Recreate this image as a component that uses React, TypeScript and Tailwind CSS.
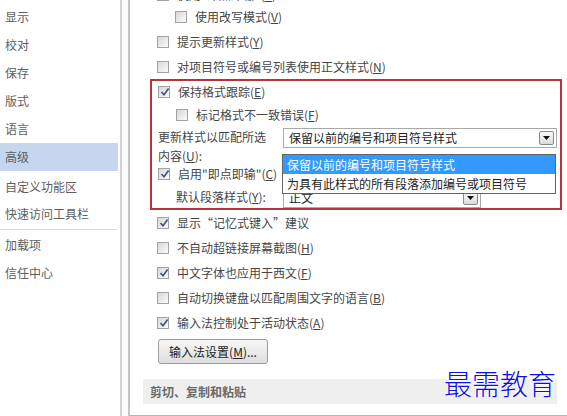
import React from "react";

const font = { fontFamily: '"Noto Sans CJK SC", "Noto Sans", sans-serif' };

function Box({ checked = false }: { checked?: boolean }) {
  return (
    <div className="relative w-[12px] h-[12px] shrink-0 border border-[#a3a3a3] bg-gradient-to-br from-[#d8d8d8] to-[#fbfbfb]">
      {checked && (
        <svg className="absolute left-[1px] top-[0px]" width="10" height="10" viewBox="0 0 10 10">
          <path d="M1.5 5 L4 7.8 L8.6 1.6" fill="none" stroke="#3d4f86" strokeWidth="1.6" />
        </svg>
      )}
    </div>
  );
}

function Acc({ k }: { k: string }) {
  return (
    <span>
      (<span className="underline">{k}</span>)
    </span>
  );
}

function Row({
  h,
  checked,
  indent,
  children,
}: {
  h: string;
  checked?: boolean;
  indent?: boolean;
  children: React.ReactNode;
}) {
  return (
    <div className={`flex items-center gap-[8px] ${h} ${indent ? "pl-[18px]" : ""}`}>
      <Box checked={checked} />
      <span className="whitespace-nowrap">{children}</span>
    </div>
  );
}

function Arrow() {
  return (
    <div className="w-[15px] h-[14px] rounded-[2px] border border-[#8a8a8a] bg-gradient-to-b from-[#fafafa] to-[#dcdcdc] flex items-center justify-center">
      <svg width="7" height="4" viewBox="0 0 7 4">
        <path d="M0 0 L7 0 L3.5 4 Z" fill="#111" />
      </svg>
    </div>
  );
}

export default function App() {
  const side1 = ["显示", "校对", "保存", "版式", "语言"];
  return (
    <div className="w-[567px] h-[416px] bg-white flex overflow-hidden text-[12px] text-[#464646] relative" style={font}>
      {/* Sidebar */}
      <div className="w-[120px] shrink-0 flex flex-col pt-[3px] text-[#5e5e5e]">
        {side1.map((t) => (
          <div key={t} className="h-[28px] flex items-center pl-[5px]">
            {t}
          </div>
        ))}
        <div className="h-[28px] flex items-center pl-[5px] bg-[#c6d6ee] w-[118px]">高级</div>
        <div className="h-[29px] flex items-center pl-[5px] pt-[2px]">自定义功能区</div>
        <div className="h-[28px] flex items-center pl-[5px]">快速访问工具栏</div>
        <div className="h-[1px] bg-[#dcdcdc] w-[117px] my-[1px]" />
        <div className="h-[28px] flex items-center pl-[5px]">加载项</div>
        <div className="h-[28px] flex items-center pl-[5px]">信任中心</div>
      </div>

      {/* Divider */}
      <div className="w-[10px] shrink-0 border-l-[2px] border-l-[#d2d2d2] border-r-[2px] border-r-[#c4c4c4] bg-[#fbfbfb]" />

      {/* Main */}
      <div className="flex-1 flex flex-col relative">
        <div className="flex flex-col pl-[27px] mt-[-15px]">
          <Row h="h-[20px]">使用"即点即输"<Acc k="C" /></Row>
          <Row h="h-[24px]" indent>使用改写模式<Acc k="V" /></Row>
          <Row h="h-[26px]">提示更新样式<Acc k="Y" /></Row>
          <Row h="h-[24px]">对项目符号或编号列表使用正文样式<Acc k="N" /></Row>
        </div>

        {/* Red box */}
        <div className="ml-[20px] mr-[5px] border-[2px] border-[#b9333b] flex flex-col pl-[6px]">
          <Row h="h-[22px]" checked>保持格式跟踪<Acc k="E" /></Row>
          <Row h="h-[24px]" indent>标记格式不一致错误<Acc k="F" /></Row>
          <div className="h-[36px] flex items-start pt-[4px]">
            <div className="w-[125px] leading-[19px] -mt-[4px]">
              <div>更新样式以匹配所选</div>
              <div>内容<Acc k="U" />:</div>
            </div>
            <div className="w-[274px] h-[20px] border border-[#a9a9a9] flex items-center justify-between pl-[5px] pr-[2px] -mt-[3px] text-[#222]">
              <span>保留以前的编号和项目符号样式</span>
              <Arrow />
            </div>
          </div>
          <Row h="h-[22px]" checked>启用"即点即输"<Acc k="C" /></Row>
          <div className="h-[23px] flex items-end">
            <div className="w-[125px] pl-[18px] pb-[2px] whitespace-nowrap">默认段落样式<Acc k="Y" />:</div>
            <div className="w-[198px] h-[20px] border border-[#a9a9a9] flex items-center justify-between pl-[5px] pr-[2px] text-[#222]">
              <span>正文</span>
              <Arrow />
            </div>
          </div>
        </div>

        <div className="flex flex-col pl-[27px]">
          <Row h="h-[26px]" checked>显示“记忆式键入”建议</Row>
          <Row h="h-[23px]">不自动超链接屏幕截图<Acc k="H" /></Row>
          <Row h="h-[27px]" checked>中文字体也应用于西文<Acc k="F" /></Row>
          <Row h="h-[24px]">自动切换键盘以匹配周围文字的语言<Acc k="B" /></Row>
          <Row h="h-[26px]" checked>输入法控制处于活动状态<Acc k="A" /></Row>
          <div className="mt-[3px] ml-[1px] w-[110px] h-[25px] rounded-[3px] border border-[#9c9c9c] bg-gradient-to-b from-[#f7f7f7] to-[#dedede] flex items-center justify-center text-[#222] whitespace-nowrap">
            输入法设置<Acc k="M" />...
          </div>
        </div>

        <div className="mt-[15px] ml-[13px] mr-[10px] h-[25px] bg-[#efefef] flex items-center pl-[7px] text-[#6a6a6a] font-bold">
          剪切、复制和粘贴
        </div>
        <div className="h-[11px]" />
        <div className="h-[1px] bg-[#b4b4b4]" />

        {/* Dropdown list popup */}
        <div className="absolute left-[152px] top-[154px] w-[274px] border border-[#646464] bg-white flex flex-col text-[#222]">
          <div className="h-[19px] bg-[#3399ff] text-white flex items-center pl-[4px]">保留以前的编号和项目符号样式</div>
          <div className="h-[19px] flex items-center pl-[4px] whitespace-nowrap">为具有此样式的所有段落添加编号或项目符号</div>
        </div>
      </div>

      {/* Watermark */}
      <div
        className="absolute left-[444px] top-[366px] text-[28px] leading-[34px] text-[#0c0cf2] font-light"
        style={{ textShadow: "0 0 2px #fff, 0 0 2px #fff, 0 0 3px #fff" }}
      >
        最需教育
      </div>
    </div>
  );
}
